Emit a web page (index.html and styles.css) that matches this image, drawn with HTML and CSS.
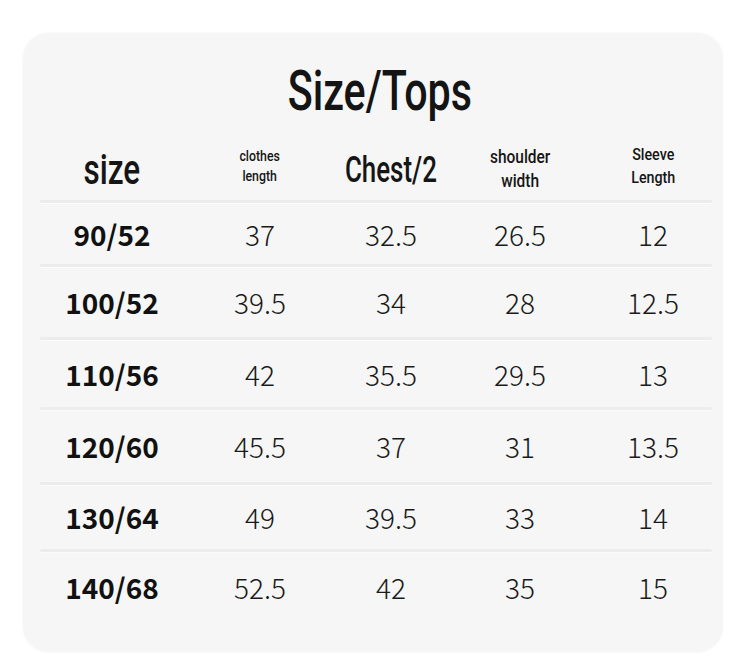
FILE: index.html
```html
<!DOCTYPE html>
<html lang="en">
<head>
<meta charset="utf-8">
<title>Size/Tops</title>
<link rel="stylesheet" href="styles.css">
</head>
<body>
<div class="card">
  <h1 class="title"><span class="cond">Size/Tops</span></h1>
  <div class="head">
    <div class="hcell"><span class="cond h-size">size</span></div>
    <div class="hcell"><span class="cond h-small">clothes<br>length</span></div>
    <div class="hcell"><span class="cond h-chest">Chest/2</span></div>
    <div class="hcell"><span class="cond h-mid">shoulder<br>width</span></div>
    <div class="hcell"><span class="cond h-mid2">Sleeve<br>Length</span></div>
  </div>
  <div class="table">
    <div class="sep"></div>
    <div class="row"><div class="key">90/52</div><div class="val">37</div><div class="val">32.5</div><div class="val">26.5</div><div class="val">12</div></div>
    <div class="sep"></div>
    <div class="row"><div class="key">100/52</div><div class="val">39.5</div><div class="val">34</div><div class="val">28</div><div class="val">12.5</div></div>
    <div class="sep"></div>
    <div class="row"><div class="key">110/56</div><div class="val">42</div><div class="val">35.5</div><div class="val">29.5</div><div class="val">13</div></div>
    <div class="sep"></div>
    <div class="row"><div class="key">120/60</div><div class="val">45.5</div><div class="val">37</div><div class="val">31</div><div class="val">13.5</div></div>
    <div class="sep"></div>
    <div class="row"><div class="key">130/64</div><div class="val">49</div><div class="val">39.5</div><div class="val">33</div><div class="val">14</div></div>
    <div class="sep"></div>
    <div class="row"><div class="key">140/68</div><div class="val">52.5</div><div class="val">42</div><div class="val">35</div><div class="val">15</div></div>
  </div>
</div>
</body>
</html>
```
FILE: styles.css
```css
* { box-sizing: border-box; }
html, body { margin: 0; padding: 0; background: #ffffff; }
body { width: 750px; height: 668px; overflow: hidden; color: #111; }

.card {
  margin: 33px 0 0 23px;
  width: 700px;
  height: 619px;
  background: #f6f6f6;
  border-radius: 26px;
  box-shadow: 0 0 3px rgba(0,0,0,0.05);
  padding: 31px 14px 0 20px;
  display: flex;
  flex-direction: column;
}

.cond { display: inline-block; transform: scaleX(0.75); }

.title {
  margin: 0;
  font-family: Roboto, "Liberation Sans", sans-serif;
  font-weight: 500;
  font-size: 55px;
  line-height: 55px;
  text-align: center;
  color: #141414;
  padding-left: 8px;
}

.head, .row {
  display: grid;
  grid-template-columns: 138px 158px 104px 154px 112px;
  align-items: center;
  justify-items: center;
}

.head {
  margin-top: 21px;
  height: 60px;
  font-family: Roboto, "Liberation Sans", sans-serif;
  color: #151515;
}
.hcell { text-align: center; white-space: nowrap; }
.h-size { font-size: 42px; line-height: 42px; font-weight: 500; }
.h-chest { font-size: 36px; line-height: 36px; font-weight: 500; transform: scaleX(0.72); }
.h-small { font-size: 15px; line-height: 20px; font-weight: 500; transform: translateY(-4px) scaleX(0.82); }
.h-mid { font-size: 18px; line-height: 24px; font-weight: 500; transform: translateY(-1px) scaleX(0.86); }
.h-mid2 { font-size: 17px; line-height: 23px; font-weight: 500; transform: translateY(-4px) scaleX(0.84); }

.table {
  display: grid;
  grid-template-rows: 3px 61px 3px 70px 3px 67px 3px 72px 3px 64px 3px 70px;
  margin: 0 -3px 0 -3px;
}
.table .row { padding: 0 3px 0 3px; }

.sep {
  height: 3px;
  border-radius: 2px;
  background: #ececec;
  box-shadow: 0 1px 0 #fbfbfb;
}

.row {
  font-family: "Noto Sans CJK SC", "Noto Sans", sans-serif;
  font-size: 28px;
  line-height: 28px;
}
.key { font-weight: 700; color: #111; }
.val { font-weight: 300; color: #1a1a1a; }
```
